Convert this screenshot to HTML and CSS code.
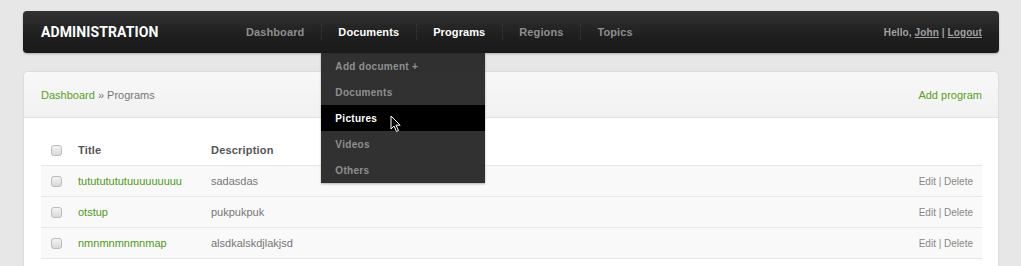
FILE: index.html
```html
<!DOCTYPE html>
<html>
<head>
    <title>Administration - Programs</title>
    <link rel="stylesheet" href="styles.css">
</head>
<body>
    <div class="container">
        <div class="topbar">
            <div class="brand">ADMINISTRATION</div>
            <ul class="nav">
                <li><a href="#">Dashboard</a></li>
                <li class="open">
                    <a href="#" class="active">Documents</a>
                    <ul class="dropdown">
                        <li><a href="#">Add document +</a></li>
                        <li><a href="#">Documents</a></li>
                        <li class="hover"><a href="#">Pictures</a></li>
                        <li><a href="#">Videos</a></li>
                        <li><a href="#">Others</a></li>
                    </ul>
                    <svg class="cursor" width="12" height="18" viewBox="0 0 12 18">
                        <path d="M1 1 L1 14 L4 11 L6.5 16.5 L8.5 15.5 L6 10.2 L10.2 10.2 Z" fill="#000" stroke="#fff" stroke-width="1"/>
                    </svg>
                </li>
                <li><a href="#" class="active">Programs</a></li>
                <li><a href="#">Regions</a></li>
                <li><a href="#">Topics</a></li>
            </ul>
            <div class="user">Hello, <a href="#">John</a> | <a href="#">Logout</a></div>
        </div>

        <div class="panel">
            <div class="panel-header">
                <div class="breadcrumb"><a href="#">Dashboard</a> &raquo; Programs</div>
                <a href="#" class="add-link">Add program</a>
            </div>
            <div class="panel-body">
                <table class="list">
                    <tr class="head">
                        <th class="check"><input type="checkbox"></th>
                        <th class="title">Title</th>
                        <th>Description</th>
                        <th></th>
                    </tr>
                    <tr>
                        <td class="check"><input type="checkbox"></td>
                        <td class="title"><a href="#">tutututututuuuuuuuuu</a></td>
                        <td>sadasdas</td>
                        <td class="actions">Edit | Delete</td>
                    </tr>
                    <tr>
                        <td class="check"><input type="checkbox"></td>
                        <td class="title"><a href="#">otstup</a></td>
                        <td>pukpukpuk</td>
                        <td class="actions">Edit | Delete</td>
                    </tr>
                    <tr>
                        <td class="check"><input type="checkbox"></td>
                        <td class="title"><a href="#">nmnmnmnmnmap</a></td>
                        <td>alsdkalskdjlakjsd</td>
                        <td class="actions">Edit | Delete</td>
                    </tr>
                </table>
            </div>
        </div>
    </div>
</body>
</html>
```

FILE: styles.css
```css
html {
    margin: 0;
    padding: 0;
}

body {
    margin: 0;
    background-color: #e7e7e7;
    color: #666;
    font-family: "Liberation Sans", Arial, sans-serif;
    font-size: 11px;
}

a {
    text-decoration: none;
}

.container {
    width: 976px;
    margin: 0 0 0 23px;
    padding-top: 11px;
}

/* top navigation */
.topbar {
    display: flex;
    align-items: center;
    height: 42px;
    background: linear-gradient(#323232, #1e1e1e 60%, #1a1a1a);
    border-radius: 4px;
    box-shadow: 0 1px 2px rgba(0, 0, 0, 0.25);
}

.brand {
    width: 188px;
    padding-left: 18px;
    color: #fff;
    font-family: Roboto, "Liberation Sans", sans-serif;
    font-weight: 700;
    font-size: 14px;
    letter-spacing: 0.1px;
}

.nav {
    display: flex;
    height: 42px;
    margin: 0;
    padding: 0;
    list-style: none;
}

.nav > li {
    position: relative;
    display: flex;
    align-items: center;
    padding: 0 17px;
}

.nav > li + li::before {
    content: "";
    position: absolute;
    left: 0;
    top: 13px;
    height: 16px;
    border-left: 1px dotted #3a3a3a;
}

.nav > li > a {
    color: #8e8e8e;
    font-weight: 700;
    font-size: 11px;
    letter-spacing: 0.1px;
}

.nav > li > a.active {
    color: #fff;
}

.dropdown {
    position: absolute;
    top: 42px;
    left: 0;
    width: 164px;
    margin: 0;
    padding: 0;
    list-style: none;
    background-color: rgba(38, 38, 38, 0.95);
    box-shadow: 0 1px 2px rgba(0, 0, 0, 0.3);
    z-index: 5;
}

.dropdown li {
    height: 26px;
    display: flex;
    align-items: center;
    padding-left: 14px;
}

.dropdown li a {
    color: #8f8f8f;
    font-weight: 700;
    font-size: 10px;
    letter-spacing: 0.3px;
}

.dropdown li.hover {
    background-color: #000;
}

.dropdown li.hover a {
    color: #fff;
}

.cursor {
    position: absolute;
    left: 69px;
    top: 104px;
    z-index: 6;
}

.user {
    margin-left: auto;
    padding-right: 17px;
    color: #a0a0a0;
    font-weight: 700;
    font-size: 10px;
    letter-spacing: 0.1px;
}

.user a {
    color: #a0a0a0;
    text-decoration: underline;
}

/* content panel */
.panel {
    margin-top: 18px;
    background-color: #fff;
    border: 1px solid #dcdcdc;
    border-radius: 5px 5px 0 0;
    height: 200px;
}

.panel-header {
    display: flex;
    justify-content: space-between;
    align-items: center;
    height: 45px;
    padding: 0 16px 0 17px;
    background: linear-gradient(#f8f8f8, #f1f1f1);
    border-bottom: 1px solid #e2e2e2;
    border-radius: 5px 5px 0 0;
    font-size: 11px;
}

.breadcrumb {
    color: #777;
}

.breadcrumb a,
.add-link {
    color: #5a9e26;
}

.panel-body {
    padding: 17px 16px 0 17px;
}

.list {
    width: 100%;
    border-collapse: collapse;
}

.list th {
    height: 30px;
    padding: 0;
    text-align: left;
    color: #555;
    font-weight: 700;
    font-size: 11px;
    letter-spacing: 0.2px;
    background-color: #fff;
}

.list td {
    height: 30px;
    padding: 0;
    background-color: #f9f9f9;
    border-top: 1px solid #e6e6e6;
    border-bottom: 1px solid #e6e6e6;
    color: #777;
    font-size: 11px;
}

.list .check {
    width: 37px;
    text-align: center;
}

.list .title {
    width: 133px;
}

.list .title a {
    color: #4e9a1a;
}

.list .actions {
    text-align: right;
    padding-right: 9px;
    font-size: 10px;
    color: #888;
}

.list input {
    appearance: none;
    width: 11px;
    height: 11px;
    margin: 0 0 0 -7px;
    vertical-align: middle;
    border: 1px solid #bcbcbc;
    border-radius: 3px;
    background: linear-gradient(#f4f4f4, #d9d9d9);
}
```
